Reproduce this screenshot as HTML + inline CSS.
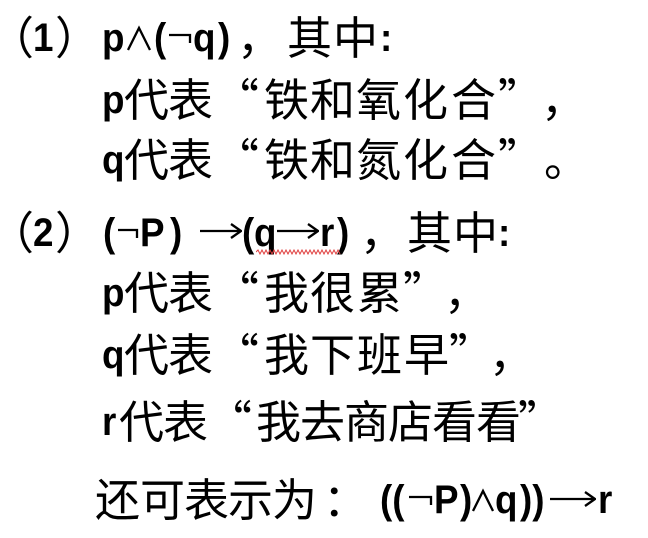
<!DOCTYPE html>
<html><head><meta charset="utf-8"><style>
body{margin:0;width:648px;height:538px;background:#fff;overflow:hidden;position:relative}
.l{position:absolute;left:0;width:648px;height:46px}
.l span,.l svg{position:absolute;white-space:nowrap}
.c{top:-3px;font-family:"Noto Sans CJK SC",sans-serif;font-size:45px;line-height:46px;color:#000}
.b{top:0px;font-family:"Liberation Sans",sans-serif;font-weight:bold;font-size:40px;line-height:46px;color:#000;transform:scaleX(.92);transform-origin:0 0}
svg{top:0;height:46px}
svg path,svg polyline{fill:none;stroke:#000;stroke-width:2.3}
</style></head><body>

<div class="l" style="top:15px">
<span class="c" style="left:-11px">（</span><span class="b" style="left:33px">1</span><span class="c" style="left:55px">）</span>
<span class="b" style="left:102px">p</span>
<svg style="left:126px" width="26" viewBox="0 0 26 46"><polyline points="2,35 13,13 24,35"/></svg>
<span class="b" style="left:154px">(</span>
<svg style="left:168px" width="24" viewBox="0 0 24 46"><path d="M1 20H22V28"/></svg>
<span class="b" style="left:193px">q</span><span class="b" style="left:218px">)</span>
<span class="c" style="left:237px">，</span><span class="c" style="left:287px">其</span><span class="c" style="left:333px">中</span><span class="b" style="left:380px">:</span>
</div>

<div class="l" style="top:77px">
<span class="b" style="left:102px">p</span><span class="c" style="left:124px">代</span><span class="c" style="left:168px">表</span><span class="c" style="left:214px">“</span>
<span class="c" style="left:264px">铁</span><span class="c" style="left:310px">和</span><span class="c" style="left:356px">氧</span><span class="c" style="left:403px">化</span><span class="c" style="left:451px">合</span><span class="c" style="left:498px">”</span><span class="c" style="left:541px">，</span>
</div>

<div class="l" style="top:137px">
<span class="b" style="left:102px">q</span><span class="c" style="left:124px">代</span><span class="c" style="left:168px">表</span><span class="c" style="left:214px">“</span>
<span class="c" style="left:264px">铁</span><span class="c" style="left:310px">和</span><span class="c" style="left:356px">氮</span><span class="c" style="left:403px">化</span><span class="c" style="left:451px">合</span><span class="c" style="left:498px">”</span><span class="c" style="left:544px">。</span>
</div>

<div class="l" style="top:210px">
<span class="c" style="left:-11px">（</span><span class="b" style="left:33px">2</span><span class="c" style="left:55px">）</span>
<span class="b" style="left:103px">(</span>
<svg style="left:117px" width="22" viewBox="0 0 22 46"><path d="M1 20H20V28"/></svg>
<span class="b" style="left:140px">P</span><span class="b" style="left:170px">)</span>
<svg style="left:200px" width="42" viewBox="0 0 42 46"><path d="M0 21H40M31 14L41 21L31 28"/></svg>
<span class="b" style="left:242px">(</span><span class="b" style="left:254px">q</span>
<svg style="left:277px" width="42" viewBox="0 0 42 46"><path d="M0 21H40M31 14L41 21L31 28"/></svg>
<span class="b" style="left:320px">r</span><span class="b" style="left:337px">)</span>
<span class="c" style="left:360px">，</span><span class="c" style="left:407px">其</span><span class="c" style="left:453px">中</span><span class="b" style="left:498px">:</span>
<svg style="left:256px;top:39px;height:6px" width="86" viewBox="0 0 86 6"><path style="stroke:#e04040;stroke-width:1" d="M0 3l2-2l2 4l2-4l2 4l2-4l2 4l2-4l2 4l2-4l2 4l2-4l2 4l2-4l2 4l2-4l2 4l2-4l2 4l2-4l2 4l2-4l2 4l2-4l2 4l2-4l2 4l2-4l2 4l2-4l2 4l2-4l2 4l2-4l2 4l2-4l2 4l2-4l2 4l2-4l2 4l2-4l2 4"/></svg>
</div>

<div class="l" style="top:270px">
<span class="b" style="left:102px">p</span><span class="c" style="left:124px">代</span><span class="c" style="left:168px">表</span><span class="c" style="left:214px">“</span>
<span class="c" style="left:264px">我</span><span class="c" style="left:310px">很</span><span class="c" style="left:357px">累</span><span class="c" style="left:403px">”</span><span class="c" style="left:444px">，</span>
</div>

<div class="l" style="top:332px">
<span class="b" style="left:102px">q</span><span class="c" style="left:124px">代</span><span class="c" style="left:168px">表</span><span class="c" style="left:214px">“</span>
<span class="c" style="left:264px">我</span><span class="c" style="left:310px">下</span><span class="c" style="left:357px">班</span><span class="c" style="left:404px">早</span><span class="c" style="left:449px">”</span><span class="c" style="left:489px">，</span>
</div>

<div class="l" style="top:399px">
<span class="b" style="left:102px">r</span><span class="c" style="left:119px">代</span><span class="c" style="left:163px">表</span><span class="c" style="left:207px">“</span>
<span class="c" style="left:256px">我</span><span class="c" style="left:300px">去</span><span class="c" style="left:344px">商</span><span class="c" style="left:388px">店</span><span class="c" style="left:432px">看</span><span class="c" style="left:476px">看</span><span class="c" style="left:518px">”</span>
</div>

<div class="l" style="top:477px">
<span class="c" style="left:95px">还</span><span class="c" style="left:140px">可</span><span class="c" style="left:184px">表</span><span class="c" style="left:228px">示</span><span class="c" style="left:272px">为</span><span class="c" style="left:323px">：</span>
<span class="b" style="left:380px">((</span>
<svg style="left:408px" width="25" viewBox="0 0 25 46"><path d="M1 20H23V28"/></svg>
<span class="b" style="left:434px">P</span><span class="b" style="left:460px">)</span>
<svg style="left:472px" width="22" viewBox="0 0 22 46"><polyline points="1,34 11,14 21,34"/></svg>
<span class="b" style="left:495px">q</span><span class="b" style="left:520px">))</span>
<svg style="left:550px" width="46" viewBox="0 0 46 46"><path d="M0 22H44M35 15L45 22L35 29"/></svg>
<span class="b" style="left:598px">r</span>
</div>

</body></html>
